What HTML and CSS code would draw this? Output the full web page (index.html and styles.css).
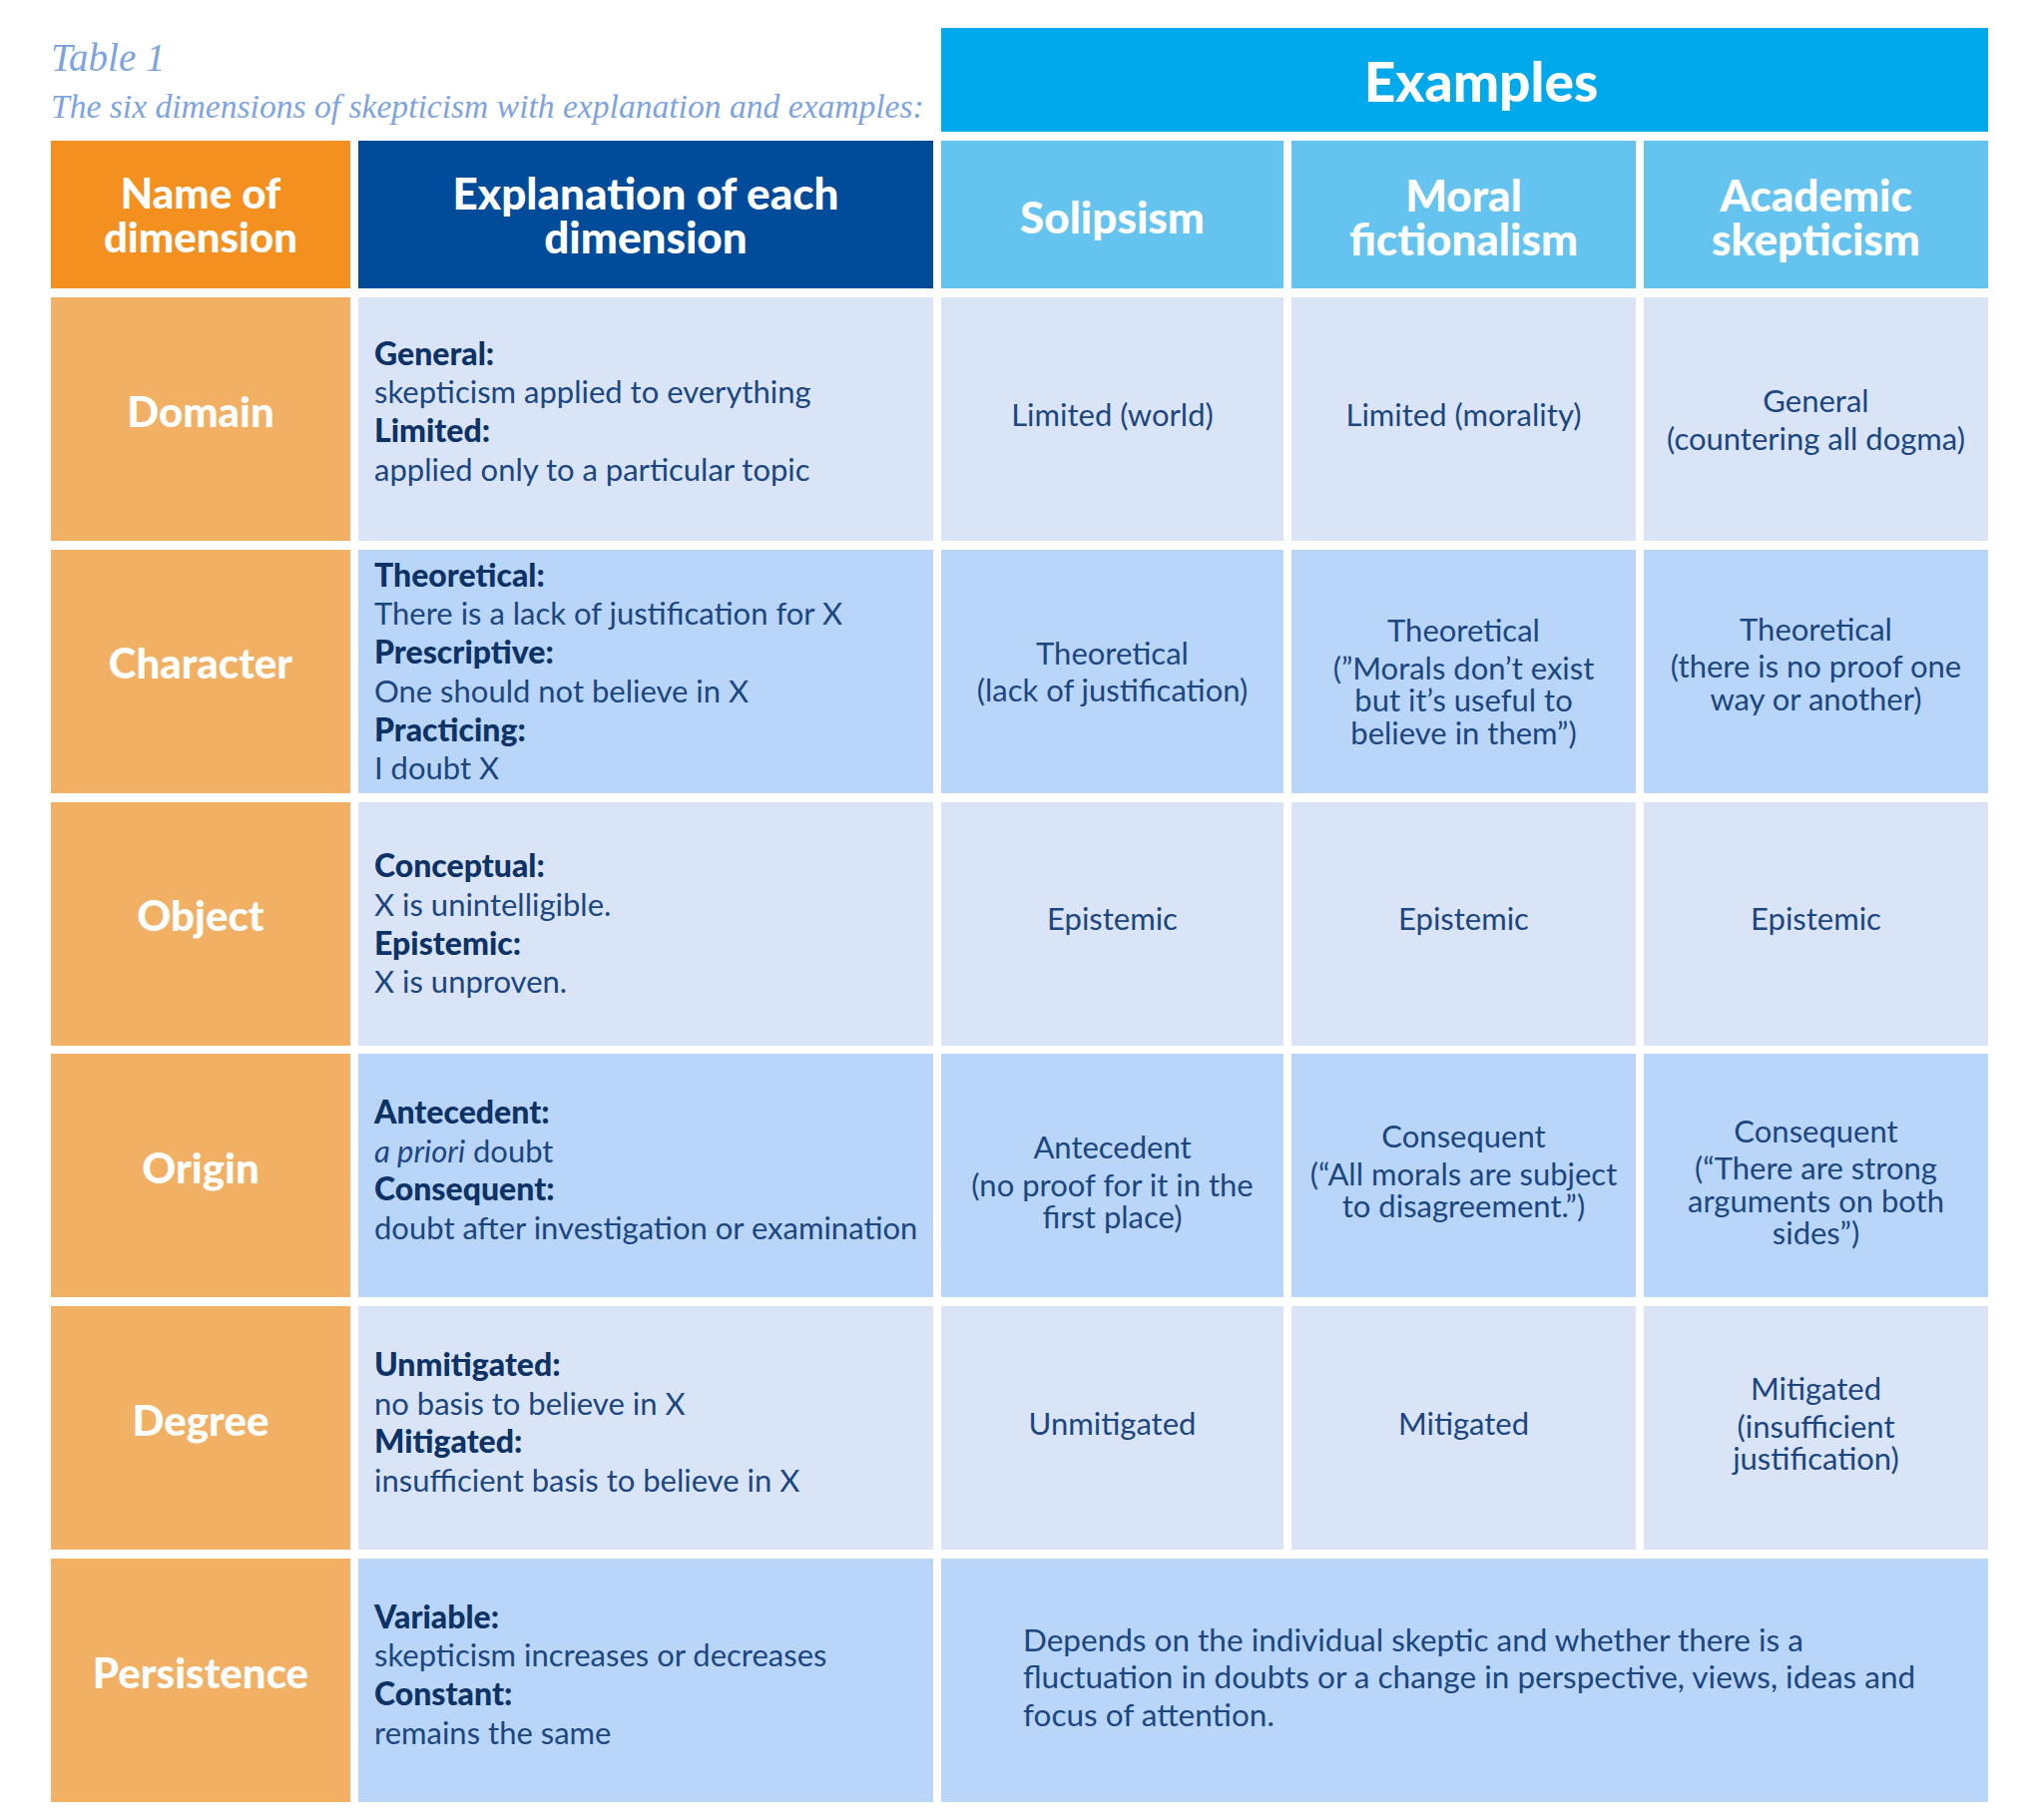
FILE: index.html
```html
<!DOCTYPE html>
<html lang="en">
<head>
<meta charset="utf-8">
<title>Table 1</title>
<link rel="stylesheet" href="styles.css">
</head>
<body>
<div class="table">
  <div class="title">
    <div class="t1">Table 1</div>
    <div class="t2">The six dimensions of skepticism with explanation and examples:</div>
  </div>
  <div class="examples">Examples</div>

  <div class="hd h-name">Name of<br>dimension</div>
  <div class="hd h-expl">Explanation of each<br>dimension</div>
  <div class="hd h-sub">Solipsism</div>
  <div class="hd h-sub">Moral<br>fictionalism</div>
  <div class="hd h-sub">Academic<br>skepticism</div>

  <!-- Domain -->
  <div class="dim">Domain</div>
  <div class="expl light up">
    <p><b>General:</b></p>
    <p>skepticism applied to everything</p>
    <p><b>Limited:</b></p>
    <p>applied only to a particular topic</p>
  </div>
  <div class="ex light"><p>Limited (world)</p></div>
  <div class="ex light"><p>Limited (morality)</p></div>
  <div class="ex light mid"><p>General</p><p class="par">(countering all dogma)</p></div>

  <!-- Character -->
  <div class="dim">Character</div>
  <div class="expl dark mid">
    <p><b>Theoretical:</b></p>
    <p>There is a lack of justification for X</p>
    <p><b>Prescriptive:</b></p>
    <p>One should not believe in X</p>
    <p><b>Practicing:</b></p>
    <p>I doubt X</p>
  </div>
  <div class="ex dark mid"><p>Theoretical</p><p class="par">(lack of justification)</p></div>
  <div class="ex dark down-more"><p>Theoretical</p><p class="par">(”Morals don’t exist<br>but it’s useful to<br>believe in them”)</p></div>
  <div class="ex dark up-more"><p>Theoretical</p><p class="par">(there is no proof one<br>way or another)</p></div>

  <!-- Object -->
  <div class="dim">Object</div>
  <div class="expl light mid">
    <p><b>Conceptual:</b></p>
    <p>X is unintelligible.</p>
    <p><b>Epistemic:</b></p>
    <p>X is unproven.</p>
  </div>
  <div class="ex light"><p>Epistemic</p></div>
  <div class="ex light"><p>Epistemic</p></div>
  <div class="ex light"><p>Epistemic</p></div>

  <!-- Origin -->
  <div class="dim">Origin</div>
  <div class="expl dark">
    <p><b>Antecedent:</b></p>
    <p><i>a priori</i> doubt</p>
    <p><b>Consequent:</b></p>
    <p>doubt after investigation or examination</p>
  </div>
  <div class="ex dark down"><p>Antecedent</p><p class="par">(no proof for it in the<br>first place)</p></div>
  <div class="ex dark"><p>Consequent</p><p class="par">(“All morals are subject<br>to disagreement.”)</p></div>
  <div class="ex dark down"><p>Consequent</p><p class="par">(“There are strong<br>arguments on both<br>sides”)</p></div>

  <!-- Degree -->
  <div class="dim">Degree</div>
  <div class="expl light">
    <p><b>Unmitigated:</b></p>
    <p>no basis to believe in X</p>
    <p><b>Mitigated:</b></p>
    <p>insufficient basis to believe in X</p>
  </div>
  <div class="ex light"><p>Unmitigated</p></div>
  <div class="ex light"><p>Mitigated</p></div>
  <div class="ex light"><p>Mitigated</p><p class="par">(insufficient<br>justification)</p></div>

  <!-- Persistence -->
  <div class="dim">Persistence</div>
  <div class="expl dark">
    <p><b>Variable:</b></p>
    <p>skepticism increases or decreases</p>
    <p><b>Constant:</b></p>
    <p>remains the same</p>
  </div>
  <div class="ex-wide dark">
    <p>Depends on the individual skeptic and whether there is a<br>fluctuation in doubts or a change in perspective, views, ideas and<br>focus of attention.</p>
  </div>
</div>
</body>
</html>
```

FILE: styles.css
```css
html, body {
  margin: 0;
  padding: 0;
  background: #ffffff;
}

body {
  font-family: "Lato", "Liberation Sans", sans-serif;
  color: #1c4680;
}

.table {
  display: grid;
  grid-template-columns: 300px 576px 343px 345px 345px;
  grid-template-rows: 104px 148.5px repeat(6, 244px);
  column-gap: 8px;
  row-gap: 8.8px;
  padding: 28px 0 0 51px;
}

p {
  margin: 0;
}

.title {
  grid-column: 1 / 3;
  font-family: "Liberation Serif", "Times New Roman", serif;
  font-style: italic;
  color: #7ea4df;
  padding-top: 8px;
}

.t1 {
  font-size: 39px;
  line-height: 44px;
}

.t2 {
  font-size: 33.6px;
  line-height: 54px;
}

.examples {
  grid-column: 3 / 6;
  background: #00a8ec;
  color: #ffffff;
  font-weight: 900;
  font-size: 55px;
  display: flex;
  align-items: center;
  justify-content: center;
  padding-top: 2px;
  padding-left: 33px;
}

.hd {
  color: #ffffff;
  font-weight: 900;
  line-height: 44px;
  display: flex;
  align-items: center;
  justify-content: center;
  text-align: center;
}

.h-name {
  background: #f3901f;
  font-size: 42px;
}

.h-expl {
  background: #004b9a;
  font-size: 44px;
}

.h-sub {
  background: #64c4ef;
  font-size: 44px;
  padding-top: 4px;
}

.dim {
  background: #f1b063;
  color: #ffffff;
  font-weight: 900;
  font-size: 42px;
  display: flex;
  align-items: center;
  justify-content: center;
  padding-bottom: 17px;
}

.light {
  background: #d9e5f7;
}

.dark {
  background: #b9d6f8;
}

.expl {
  display: flex;
  flex-direction: column;
  justify-content: center;
  padding-left: 16px;
  padding-bottom: 12px;
  font-size: 31px;
  line-height: 38.7px;
}

.expl b {
  font-weight: 900;
  font-size: 32px;
  color: #0d3265;
}

.ex {
  display: flex;
  flex-direction: column;
  justify-content: center;
  align-items: center;
  text-align: center;
  font-size: 31px;
  line-height: 32.5px;
  padding-bottom: 10px;
}

.ex .par {
  margin-top: 5px;
}

.ex-wide {
  grid-column: 3 / 6;
  display: flex;
  flex-direction: column;
  justify-content: center;
  padding-left: 82px;
  padding-bottom: 6px;
  font-size: 31.5px;
  line-height: 37.5px;
}

/* vertical nudges to follow the reference's uneven centring */
.mid {
  padding-bottom: 0;
}

.up {
  padding-bottom: 16px;
}

.up-more {
  padding-bottom: 16px;
}

.down {
  padding-top: 12px;
  padding-bottom: 0;
}

.down-more {
  padding-top: 20px;
  padding-bottom: 0;
}
```
